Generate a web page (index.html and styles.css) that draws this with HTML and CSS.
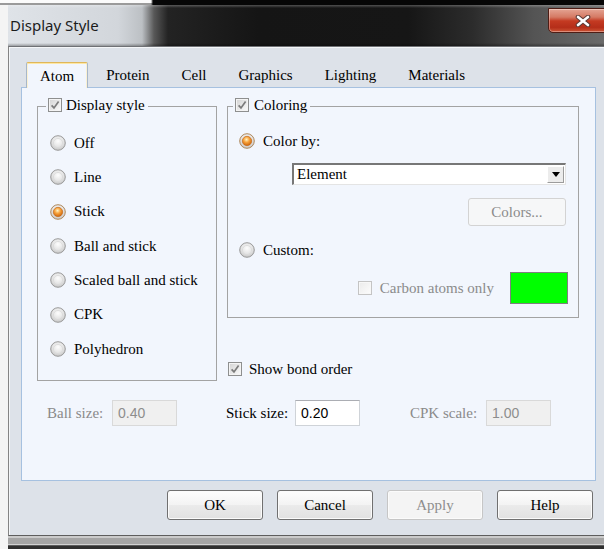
FILE: index.html
```html
<!DOCTYPE html>
<html lang="en">
<head>
<meta charset="utf-8">
<title>Display Style</title>
<link rel="stylesheet" href="styles.css">
</head>
<body>
<svg class="defs" width="0" height="0" aria-hidden="true">
  <defs>
    <radialGradient id="radio-off" cx="50%" cy="38%" r="62%">
      <stop offset="0" stop-color="#fdfdfd"/>
      <stop offset="0.6" stop-color="#e4e4e4"/>
      <stop offset="1" stop-color="#c4c4c4"/>
    </radialGradient>
    <radialGradient id="radio-dot" cx="45%" cy="35%" r="65%">
      <stop offset="0" stop-color="#fff3c4"/>
      <stop offset="0.45" stop-color="#f8a43e"/>
      <stop offset="1" stop-color="#cc6106"/>
    </radialGradient>
    <linearGradient id="box-fill" x1="0" y1="0" x2="1" y2="1">
      <stop offset="0" stop-color="#d6d6d6"/>
      <stop offset="1" stop-color="#f8f8f8"/>
    </linearGradient>
    <linearGradient id="box-off" x1="0" y1="0" x2="1" y2="1">
      <stop offset="0" stop-color="#ececec"/>
      <stop offset="1" stop-color="#fbfbfb"/>
    </linearGradient>
  </defs>
</svg>

<div class="top-edge"></div>

<div class="window">
  <div class="titlebar">
    <span class="title">Display Style</span>
    <div class="close">
      <svg width="16" height="12" viewBox="0 0 16 12">
        <path d="M3 2 L13 10 M13 2 L3 10" stroke="#5a3a36" stroke-width="4.6" stroke-linecap="round"/>
        <path d="M3 2 L13 10 M13 2 L3 10" stroke="#ffffff" stroke-width="2.6" stroke-linecap="round"/>
      </svg>
    </div>
  </div>

  <div class="client">
    <div class="tabs">
      <span class="tab active">Atom</span>
      <span class="tab">Protein</span>
      <span class="tab">Cell</span>
      <span class="tab">Graphics</span>
      <span class="tab">Lighting</span>
      <span class="tab">Materials</span>
    </div>

    <div class="panel">
      <div class="groups">
        <fieldset class="group group-style">
          <legend class="legend-style">
            <span class="legend-label">
              <svg class="check" viewBox="0 0 14 14"><rect x=".5" y=".5" width="13" height="13" fill="#f4f4f4" stroke="#8e8f8f"/><rect x="2" y="2" width="10" height="10" fill="url(#box-fill)"/><path d="M3.6 7.3 L6 9.9 L10.6 3.6" fill="none" stroke="#7b7b7b" stroke-width="1.7"/></svg>
              Display style
            </span>
          </legend>
          <div class="style-list">
            <div class="option"><svg class="radio" viewBox="0 0 16 16"><circle cx="8" cy="8" r="7.3" fill="url(#radio-off)" stroke="#9b9b9b"/><circle cx="8" cy="8" r="4.6" fill="none" stroke="#d9d9d9" stroke-width=".8"/></svg>Off</div>
            <div class="option"><svg class="radio" viewBox="0 0 16 16"><circle cx="8" cy="8" r="7.3" fill="url(#radio-off)" stroke="#9b9b9b"/><circle cx="8" cy="8" r="4.6" fill="none" stroke="#d9d9d9" stroke-width=".8"/></svg>Line</div>
            <div class="option"><svg class="radio" viewBox="0 0 16 16"><circle cx="8" cy="8" r="7.3" fill="url(#radio-off)" stroke="#b08a5e"/><circle cx="8" cy="8" r="4.7" fill="url(#radio-dot)" stroke="#c26a1c" stroke-width=".7"/></svg>Stick</div>
            <div class="option"><svg class="radio" viewBox="0 0 16 16"><circle cx="8" cy="8" r="7.3" fill="url(#radio-off)" stroke="#9b9b9b"/><circle cx="8" cy="8" r="4.6" fill="none" stroke="#d9d9d9" stroke-width=".8"/></svg>Ball and stick</div>
            <div class="option"><svg class="radio" viewBox="0 0 16 16"><circle cx="8" cy="8" r="7.3" fill="url(#radio-off)" stroke="#9b9b9b"/><circle cx="8" cy="8" r="4.6" fill="none" stroke="#d9d9d9" stroke-width=".8"/></svg>Scaled ball and stick</div>
            <div class="option"><svg class="radio" viewBox="0 0 16 16"><circle cx="8" cy="8" r="7.3" fill="url(#radio-off)" stroke="#9b9b9b"/><circle cx="8" cy="8" r="4.6" fill="none" stroke="#d9d9d9" stroke-width=".8"/></svg>CPK</div>
            <div class="option"><svg class="radio" viewBox="0 0 16 16"><circle cx="8" cy="8" r="7.3" fill="url(#radio-off)" stroke="#9b9b9b"/><circle cx="8" cy="8" r="4.6" fill="none" stroke="#d9d9d9" stroke-width=".8"/></svg>Polyhedron</div>
          </div>
        </fieldset>

        <div class="right-col">
          <fieldset class="group group-color">
            <legend class="legend-color">
              <span class="legend-label">
                <svg class="check" viewBox="0 0 14 14"><rect x=".5" y=".5" width="13" height="13" fill="#f4f4f4" stroke="#8e8f8f"/><rect x="2" y="2" width="10" height="10" fill="url(#box-fill)"/><path d="M3.6 7.3 L6 9.9 L10.6 3.6" fill="none" stroke="#7b7b7b" stroke-width="1.7"/></svg>
                Coloring
              </span>
            </legend>
            <div class="color-body">
              <div class="option option-tall"><svg class="radio" viewBox="0 0 16 16"><circle cx="8" cy="8" r="7.3" fill="url(#radio-off)" stroke="#b08a5e"/><circle cx="8" cy="8" r="4.7" fill="url(#radio-dot)" stroke="#c26a1c" stroke-width=".7"/></svg>Color by:</div>
              <div class="select">
                <span class="select-value">Element</span>
                <span class="select-arrow"><svg width="8" height="5" viewBox="0 0 8 5"><path d="M0 0 H8 L4 5 Z" fill="#000"/></svg></span>
              </div>
              <button class="btn-small" disabled>Colors...</button>
              <div class="option option-tall option-custom"><svg class="radio" viewBox="0 0 16 16"><circle cx="8" cy="8" r="7.3" fill="url(#radio-off)" stroke="#9b9b9b"/><circle cx="8" cy="8" r="4.6" fill="none" stroke="#d9d9d9" stroke-width=".8"/></svg>Custom:</div>
              <div class="carbon-row">
                <span class="carbon-label">
                  <svg class="check" viewBox="0 0 14 14"><rect x=".5" y=".5" width="13" height="13" fill="#f7f7f7" stroke="#c4c4c4"/><rect x="2" y="2" width="10" height="10" fill="url(#box-off)"/></svg>
                  Carbon atoms only
                </span>
                <span class="swatch"></span>
              </div>
            </div>
          </fieldset>

          <div class="bond-row">
            <svg class="check" viewBox="0 0 14 14"><rect x=".5" y=".5" width="13" height="13" fill="#f4f4f4" stroke="#8e8f8f"/><rect x="2" y="2" width="10" height="10" fill="url(#box-fill)"/><path d="M3.6 7.3 L6 9.9 L10.6 3.6" fill="none" stroke="#7b7b7b" stroke-width="1.7"/></svg>
            Show bond order
          </div>
        </div>
      </div>

      <div class="sizes">
        <span class="size-label disabled">Ball size:</span>
        <span class="field field-disabled">0.40</span>
        <span class="size-label">Stick size:</span>
        <span class="field">0.20</span>
        <span class="size-label disabled">CPK scale:</span>
        <span class="field field-disabled">1.00</span>
      </div>
    </div>

    <div class="actions">
      <button class="btn">OK</button>
      <button class="btn">Cancel</button>
      <button class="btn" disabled>Apply</button>
      <button class="btn">Help</button>
    </div>
  </div>

  <div class="bottom-edge"></div>
</div>
</body>
</html>
```

FILE: styles.css
```css
* {
  box-sizing: border-box;
}

html,
body {
  margin: 0;
}

body {
  width: 604px;
  height: 549px;
  overflow: hidden;
  background: #f4f4f4;
  color: #000;
  font-size: 15px;
  font-family: "Liberation Serif", "DejaVu Serif", serif;
}

button {
  font-family: "Liberation Serif", "DejaVu Serif", serif;
  font-size: 15px;
}

.defs {
  position: absolute;
  width: 0;
  height: 0;
}

/* strip of the desktop above the dialog */
.top-edge {
  height: 5px;
  background:
    linear-gradient(to right, transparent 151px, #060606 153px),
    linear-gradient(#fbfbfb 0 3px, #9a9a9a 3px);
}

.window {
  margin-left: 8px;
  width: 596px;
  height: 544px;
  display: flex;
  flex-direction: column;
}

/* Aero-style caption */
.titlebar {
  position: relative;
  flex: none;
  height: 41px;
  background:
    linear-gradient(to bottom, rgba(255, 255, 255, 0.25) 0, rgba(255, 255, 255, 0) 3px, rgba(0, 0, 0, 0) 38px, rgba(0, 0, 0, 0.3) 41px),
    linear-gradient(to right, #dfe3e8 0, #d2d6db 110px, #bcc0c4 134px, #585858 146px, #232323 160px, #151515 250px, #161616 400px, #2c2c2c 465px, #545454 525px, #6a6a6a 596px);
}

.title {
  display: block;
  padding: 10px 0 0 2px;
  font: 15px/20px "Noto Sans", "Open Sans", sans-serif;
  color: #1b1b1b;
}

.close {
  position: absolute;
  left: 540px;
  top: 3px;
  width: 70px;
  height: 25px;
  display: flex;
  align-items: center;
  justify-content: center;
  border: 1px solid #4e1d15;
  border-radius: 0 0 0 5px;
  background: linear-gradient(#e4a493 0, #d57a64 35%, #c43a22 52%, #b52e19 80%, #cc5536 100%);
  box-shadow: inset 0 0 0 1px rgba(255, 255, 255, 0.35);
}

.client {
  flex: 1;
  display: flex;
  flex-direction: column;
  padding: 15px 8px 0 12px;
  background: #dde2e9;
  border-top: 1px solid #6f7175;
  border-left: 1px solid #848484;
  border-bottom: 1px solid #5e5e5e;
  box-shadow: inset 1px 1px 0 #f4f6f8;
}

/* tab strip */
.tabs {
  position: relative;
  z-index: 1;
  display: flex;
  height: 26px;
  margin-bottom: -1px;
  padding-left: 5px;
}

.tab {
  padding: 0 16px;
  line-height: 26px;
  white-space: nowrap;
}

.tab.active {
  padding: 0 13px;
  margin-right: 2px;
  height: 26px;
  background: #f2f6fd;
  border: 1px solid #a7b7ca;
  border-top-color: #e0b75a;
  border-bottom: none;
  border-radius: 2px 2px 0 0;
  box-shadow: inset 0 1px 0 #fde7a4, inset 1px 0 0 #fbf1d3, inset -1px 0 0 #fbf1d3;
}

.panel {
  height: 394px;
  flex: none;
  padding: 8px 15px 0;
  background: #f2f6fd;
  border: 1px solid #a6c1e0;
}

.groups {
  display: grid;
  grid-template-columns: 180px 352px;
  column-gap: 10px;
  align-items: start;
}

.group {
  margin: 0;
  padding: 0;
  min-width: 0;
  border: 1px solid #a3a3a3;
}

.group legend {
  padding: 0 3px 0 2px;
}

.legend-style {
  margin-left: 8px;
}

.legend-color {
  margin-left: 5px;
}

.legend-label {
  display: inline-flex;
  align-items: center;
  gap: 4px;
  height: 18px;
  line-height: 18px;
}

.legend-color .legend-label {
  gap: 5px;
}

.check {
  flex: none;
  width: 14px;
  height: 14px;
}

.radio {
  flex: none;
  width: 16px;
  height: 16px;
}

.style-list {
  padding: 10px 0 14px 12px;
}

.option {
  display: flex;
  align-items: center;
  gap: 8px;
  height: 34.33px;
  white-space: nowrap;
}

.color-body {
  display: flex;
  flex-direction: column;
  padding: 10px 12px 13px 11px;
}

.option-tall {
  height: 30px;
}

.option-custom {
  margin-top: 9px;
}

/* combo box */
.select {
  display: flex;
  width: 274px;
  height: 22px;
  margin: 7px 0 0 53px;
  background: #fff;
  border-style: solid;
  border-width: 2px 1px 1px 2px;
  border-color: #777 #e4e4e4 #e4e4e4 #777;
}

.select-value {
  flex: 1;
  padding-left: 3px;
  line-height: 18px;
}

.select-arrow {
  width: 17px;
  margin: 1px;
  display: flex;
  align-items: center;
  justify-content: center;
  background: #ececec;
  border: 1px solid;
  border-color: #fff #9c9c9c #9c9c9c #fff;
}

.btn-small {
  align-self: flex-end;
  width: 98px;
  height: 28px;
  margin-top: 13px;
  padding: 0;
  color: #8b8b8b;
  background: #f6f7f8;
  border: 1px solid #d3d3d3;
  border-radius: 3px;
}

.carbon-row {
  display: flex;
  align-items: center;
  justify-content: flex-end;
  gap: 16px;
  height: 32px;
  margin: 7px -2px 0 0;
}

.carbon-label {
  display: inline-flex;
  align-items: center;
  gap: 8px;
  color: #8b8b8b;
}

.swatch {
  width: 58px;
  height: 32px;
  background: #00ff00;
  border: 1px solid #7f7f7f;
}

.right-col {
  display: flex;
  flex-direction: column;
}

.bond-row {
  display: flex;
  align-items: center;
  gap: 7px;
  height: 18px;
  margin-top: 42px;
  padding-left: 1px;
}

/* size inputs along the bottom of the page */
.sizes {
  display: grid;
  grid-template-columns: 65px 114px 69px 115px 76px 65px;
  align-items: center;
  margin: 19px 0 0 10px;
}

.size-label {
  white-space: nowrap;
}

.size-label.disabled {
  color: #8a8a8a;
}

.field {
  width: 65px;
  height: 26px;
  padding-left: 5px;
  font: 14px/24px "Liberation Sans", Arial, sans-serif;
  background: #fff;
  border: 1px solid #cfd3d8;
  border-top-color: #abadb3;
}

.field-disabled {
  color: #8d8d8d;
  background: #f0f0f0;
  border-color: #d9d9d9;
}

.actions {
  display: flex;
  justify-content: flex-end;
  gap: 14px;
  margin-top: 9px;
  padding-right: 3px;
}

.btn {
  width: 96px;
  height: 30px;
  padding: 0;
  color: #000;
  border: 1px solid #707070;
  border-radius: 3px;
  background: linear-gradient(#fdfdfd 0, #f3f3f3 50%, #ebebeb 50%, #e1e1e1 100%);
  box-shadow: inset 0 0 0 1px #fbfbfb;
}

.btn:disabled {
  color: #8d8d8d;
  border-color: #c6c6c6;
  background: #f4f4f4;
}

.bottom-edge {
  flex: none;
  height: 13px;
  background: linear-gradient(#cbcbcb 0 2px, #a5a5a5 2px 8px, #d2d2d2 8px 9px, #5c5c5c 9px 10px, #2f2f2f 10px);
}
```
